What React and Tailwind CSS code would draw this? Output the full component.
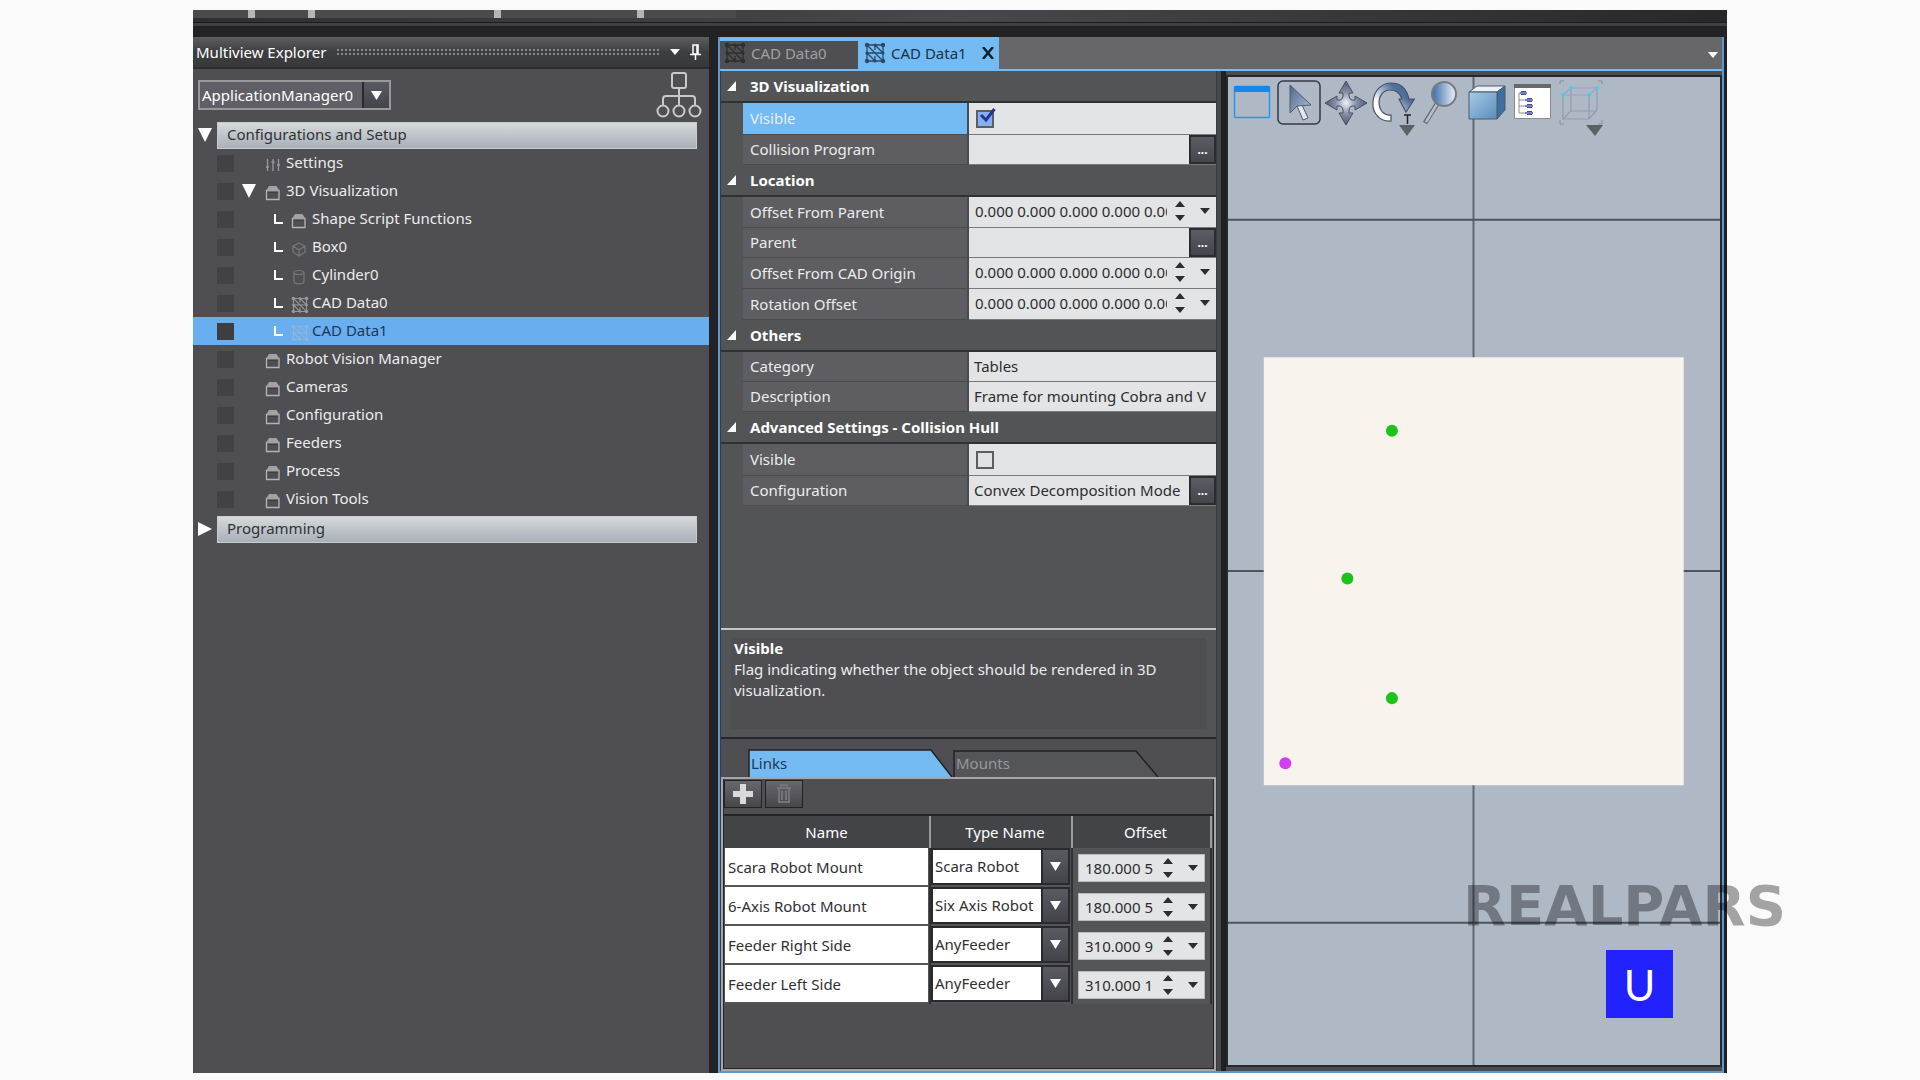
import clsx from 'clsx';

const treeItems = [
  { label: 'Settings', icon: 'settings', depth: 0 },
  { label: '3D Visualization', icon: 'folder', depth: 0, open: true },
  { label: 'Shape Script Functions', icon: 'folder', depth: 1 },
  { label: 'Box0', icon: 'box', depth: 1 },
  { label: 'Cylinder0', icon: 'cylinder', depth: 1 },
  { label: 'CAD Data0', icon: 'cad', depth: 1 },
  { label: 'CAD Data1', icon: 'cad', depth: 1, selected: true },
  { label: 'Robot Vision Manager', icon: 'folder', depth: 0 },
  { label: 'Cameras', icon: 'folder', depth: 0 },
  { label: 'Configuration', icon: 'folder', depth: 0 },
  { label: 'Feeders', icon: 'folder', depth: 0 },
  { label: 'Process', icon: 'folder', depth: 0 },
  { label: 'Vision Tools', icon: 'folder', depth: 0 },
];

const zeroOffset = '0.000 0.000 0.000 0.000 0.000 0.000';

const propertyGroups = [
  {
    title: '3D Visualization',
    rows: [
      { id: 'visible', label: 'Visible', type: 'check', checked: true, selected: true },
      { id: 'collision-program', label: 'Collision Program', type: 'browse', value: '' },
    ],
  },
  {
    title: 'Location',
    rows: [
      { id: 'offset-parent', label: 'Offset From Parent', type: 'spin', value: zeroOffset },
      { id: 'parent', label: 'Parent', type: 'browse', value: '' },
      { id: 'offset-cad', label: 'Offset From CAD Origin', type: 'spin', value: zeroOffset },
      { id: 'rotation', label: 'Rotation Offset', type: 'spin', value: zeroOffset },
    ],
  },
  {
    title: 'Others',
    rows: [
      { id: 'category', label: 'Category', type: 'text', value: 'Tables' },
      { id: 'description', label: 'Description', type: 'text', value: 'Frame for mounting Cobra and V' },
    ],
  },
  {
    title: 'Advanced Settings - Collision Hull',
    rows: [
      { id: 'hull-visible', label: 'Visible', type: 'check', checked: false },
      { id: 'hull-config', label: 'Configuration', type: 'browse', value: 'Convex Decomposition Mode' },
    ],
  },
];

const links = [
  { name: 'Scara Robot Mount', type: 'Scara Robot', offset: '180.000 5' },
  { name: '6-Axis Robot Mount', type: 'Six Axis Robot', offset: '180.000 5' },
  { name: 'Feeder Right Side', type: 'AnyFeeder', offset: '310.000 9' },
  { name: 'Feeder Left Side', type: 'AnyFeeder', offset: '310.000 1' },
];

const rowHeights = {
  check: 'h-8',
  browse: 'h-[30px]',
  spin: 'h-[31px]',
  text: 'h-[30px]',
};

function Caret({ className }) {
  return (
    <svg className={className} viewBox="0 0 10 7" preserveAspectRatio="none" aria-hidden="true">
      <path d="M0 0h10L5 7z" fill="currentColor" />
    </svg>
  );
}

function CadIcon({ className }) {
  return (
    <svg className={className} viewBox="0 0 22 22" fill="none" stroke="currentColor" aria-hidden="true">
      <path d="M3 2v18M19 2v18M2 3h18M2 11h18M2 19h18M3 3l16 16M11 3l8 8M3 11l8 8M11 3v5M11 14v5" strokeWidth="1.300" />
      <g fill="currentColor" stroke="none">
        <circle cx="3" cy="3" r="2.200" />
        <circle cx="11" cy="3" r="1.600" />
        <circle cx="19" cy="3" r="2.200" />
        <circle cx="3" cy="11" r="1.600" />
        <circle cx="19" cy="11" r="1.600" />
        <circle cx="3" cy="19" r="2.200" />
        <circle cx="11" cy="19" r="1.600" />
        <circle cx="19" cy="19" r="2.200" />
      </g>
    </svg>
  );
}

function TreeIcon({ name, selected }) {
  if (name === 'cad') {
    return <CadIcon className={clsx('h-[18px] w-[18px]', selected ? 'text-[#8fb4dc]' : 'text-[#98989c]')} />;
  }
  if (name === 'settings') {
    return (
      <svg className="h-4 w-4" viewBox="0 0 16 16" fill="none" stroke="#9a9a9e" strokeWidth="1.300" aria-hidden="true">
        <path d="M2.500 2v12M8 2v12M13.500 2v12M1 10h3M6.500 5h3M12 8h3" />
      </svg>
    );
  }
  if (name === 'box') {
    return (
      <svg className="h-4 w-4" viewBox="0 0 16 16" fill="none" stroke="#77777b" strokeWidth="1.200" aria-hidden="true">
        <path d="M8 2l6 3v6l-6 4-6-4V5zM2 5l6 4 6-4M8 9v6" />
      </svg>
    );
  }
  if (name === 'cylinder') {
    return (
      <svg className="h-4 w-4" viewBox="0 0 16 16" fill="none" stroke="#77777b" strokeWidth="1.200" aria-hidden="true">
        <ellipse cx="8" cy="3.500" rx="5" ry="2" />
        <path d="M3 3.500v9c0 3 10 3 10 0v-9" />
      </svg>
    );
  }
  return (
    <svg className="h-4 w-4" viewBox="0 0 16 16" fill="none" aria-hidden="true">
      <path d="M1.500 5.500v9h12.500v-9z" stroke="#b4b4b6" strokeWidth="1.300" />
      <path d="M1 6l3-5h7.500l3 5z" fill="#a2a2a5" />
      <path d="M3 7.500h9.500" stroke="#3f3f42" />
    </svg>
  );
}

function SelectBox({ id, label, value, className, arrowClass }) {
  return (
    <div className={clsx('relative', className)}>
      <select id={id} aria-label={label} defaultValue={value} className="h-full w-full appearance-none bg-transparent pl-[2px] pr-6 outline-none">
        <option>{value}</option>
      </select>
      <span className={clsx('pointer-events-none absolute inset-y-0 right-0 flex items-center justify-center border-l-2 border-[#2a2a2d] bg-gradient-to-b from-[#5a5a62] to-[#43434a] text-white', arrowClass)}>
        <Caret className="h-[9px] w-[11px]" />
      </span>
    </div>
  );
}

function SpinBox({ id, label, value, className }) {
  return (
    <div className={clsx('flex h-full items-center bg-[#e2e4e5] text-[#2c2d30]', className)}>
      <input id={id} aria-label={label} defaultValue={value} className="h-full min-w-0 flex-1 bg-transparent outline-none" />
      <div className="ml-2 flex flex-col gap-2">
        <button type="button" aria-label="Increase" className="block">
          <Caret className="h-[6px] w-[10px] rotate-180" />
        </button>
        <button type="button" aria-label="Decrease" className="block">
          <Caret className="h-[6px] w-[10px]" />
        </button>
      </div>
      <button type="button" aria-label="Open editor" className="ml-[15px] mr-[6px]">
        <Caret className="h-[6px] w-[10px]" />
      </button>
    </div>
  );
}

function BarHeader({ label, open }) {
  return (
    <button type="button" aria-expanded={open} className="flex h-7 w-full items-center gap-[5px] pl-[5px] pr-3 text-left">
      <Caret className={clsx('h-[14px] w-[14px] shrink-0 text-white', !open && '-rotate-90')} />
      <span className="flex h-[27px] flex-1 items-center border border-[#c6ccd0] bg-gradient-to-b from-[#d7d9da] to-[#a8b0b8] pb-[2px] pl-[9px] text-[#2f3236]">
        {label}
      </span>
    </button>
  );
}

function TreeRow({ item }) {
  return (
    <li className={clsx('flex h-7 items-center pl-6', item.selected ? 'bg-[#69aeef] text-[#1d3855]' : 'text-[#ececec]')}>
      <span className={clsx('h-[17px] w-[17px] shrink-0', item.selected ? 'bg-[#3e3e42]' : 'bg-[#424246]')} />
      <span className="flex w-[31px] shrink-0 justify-center text-white">
        {item.open && <Caret className="ml-[-2px] h-[14px] w-[14px]" />}
      </span>
      {item.depth > 0 && <span className="ml-[9px] mr-2 h-[10px] w-[9px] shrink-0 border-b-2 border-l-2 border-white" />}
      <span className="flex w-[21px] shrink-0 pt-1">
        <TreeIcon name={item.icon} selected={item.selected} />
      </span>
      <span className="whitespace-nowrap pb-[2px]">{item.label}</span>
    </li>
  );
}

function Explorer() {
  return (
    <aside className="flex w-[516px] shrink-0 flex-col bg-[#4f4e52] text-[15px]">
      <header className="flex h-8 shrink-0 items-center border-b-2 border-[#2b2c2e] bg-gradient-to-b from-[#5c5e60] via-[#3c3e40] to-[#38393b] pl-[3px] pr-2 text-white">
        <h2 className="whitespace-nowrap">Multiview Explorer</h2>
        <span className="ml-[10px] mr-[10px] h-2 flex-1 bg-[radial-gradient(circle,#85878a_1px,transparent_1px)] bg-[size:4px_4px]" />
        <button type="button" aria-label="Panel menu">
          <Caret className="h-[6px] w-[10px]" />
        </button>
        <button type="button" aria-label="Pin panel" className="ml-[10px]">
          <svg className="h-4 w-[11px]" viewBox="0 0 11 16" fill="none" stroke="#fff" strokeWidth="1.500" aria-hidden="true">
            <path d="M3 1h5v9H3zM0 10.500h11M5.500 11v5M7 1v9" />
          </svg>
        </button>
      </header>
      <div className="flex items-end justify-between pb-[3px] pl-[5px] pr-[7px] pt-[3px]">
        <SelectBox
          id="application"
          label="Application"
          value="ApplicationManager0"
          className="mb-2 h-[30px] w-[193px] border-2 border-[#99999c] bg-[#605f65] text-white"
          arrowClass="w-[27px]"
        />
        <button type="button" aria-label="Show topology">
          <svg className="h-[46px] w-[46px]" viewBox="0 0 46 46" fill="none" stroke="#c9c9cb" strokeWidth="2" aria-hidden="true">
            <rect x="16" y="1" width="14" height="15" rx="2" />
            <path d="M23 16v17M7 33v-6q0-3 3-3h26q3 0 3 3v6" />
            <circle cx="7" cy="39" r="5.500" />
            <circle cx="23" cy="39" r="5.500" />
            <circle cx="39" cy="39" r="5.500" />
          </svg>
        </button>
      </div>
      <BarHeader label="Configurations and Setup" open />
      <ul className="pb-[2px]">
        {treeItems.map((item) => (
          <TreeRow key={item.label} item={item} />
        ))}
      </ul>
      <BarHeader label="Programming" open={false} />
    </aside>
  );
}

function PropertyValue({ row }) {
  if (row.type === 'check') {
    return (
      <div className="relative flex h-full items-center bg-[#e2e4e5] pl-[7px]">
        <input
          id={row.id}
          type="checkbox"
          defaultChecked={row.checked}
          className="h-[18px] w-[18px] appearance-none border-2 border-[#5c5d60] bg-[#dfe1e2] checked:bg-[#84aff5]"
        />
        {row.checked && (
          <svg className="pointer-events-none absolute left-[10px] top-[5px] h-[15px] w-[17px]" viewBox="0 0 17 15" fill="none" stroke="#27348f" strokeWidth="3" aria-hidden="true">
            <path d="M2 7l5 5 8.500-11" />
          </svg>
        )}
      </div>
    );
  }
  if (row.type === 'spin') {
    return <SpinBox id={row.id} value={row.value} className="pb-[2px] pl-[6px]" />;
  }
  return (
    <div className="flex h-full bg-[#e2e4e5] text-[#2c2d30]">
      <input id={row.id} defaultValue={row.value} className="min-w-0 flex-1 bg-transparent pl-[5px] outline-none" />
      {row.type === 'browse' && (
        <button type="button" aria-label={`Browse ${row.label}`} className="w-[27px] shrink-0 border-2 border-[#2c2c30] bg-gradient-to-b from-[#5c5c66] to-[#45454c] text-xs font-bold leading-3 text-white">
          ...
        </button>
      )}
    </div>
  );
}

function PropertyGrid() {
  return (
    <div className="flex-1">
      {propertyGroups.map((group) => (
        <section key={group.title}>
          <h3 className="flex h-8 items-center border-b-2 border-[#2f3133] pl-[6px] font-bold text-white">
            <svg className="mr-[14px] h-[10px] w-[9px]" viewBox="0 0 9 10" aria-hidden="true">
              <path d="M9 0v10H0z" fill="#fff" />
            </svg>
            {group.title}
          </h3>
          {group.rows.map((row) => (
            <div key={row.id} className={clsx('flex pl-[22px]', rowHeights[row.type])}>
              <label
                htmlFor={row.id}
                className={clsx(
                  'flex w-[226px] shrink-0 items-center border-b border-r-2 border-[#4a4b4e] pl-[7px] text-[#ececec]',
                  row.selected ? 'bg-[#74bbf3]' : 'bg-[#5e5d61]'
                )}
              >
                {row.label}
              </label>
              <div className="min-w-0 flex-1 border-b border-[#77797b]">
                <PropertyValue row={row} />
              </div>
            </div>
          ))}
        </section>
      ))}
    </div>
  );
}

function LinksPanel() {
  return (
    <div className="flex h-[332px] shrink-0 flex-col bg-[#4f4e52] pt-[10px]">
      <div role="tablist" className="flex h-7 pl-[27px]">
        <button type="button" role="tab" aria-selected="true" className="relative w-[205px] text-left text-[#1d3855]">
          <svg className="absolute inset-0 h-full w-full" viewBox="0 0 205 28" preserveAspectRatio="none" aria-hidden="true">
            <path d="M1 28V1h182l21 27" fill="#74bbf3" stroke="#202124" strokeWidth="1.500" />
          </svg>
          <span className="relative pl-[3px]">Links</span>
        </button>
        <button type="button" role="tab" aria-selected="false" className="relative w-[207px] text-left text-[#98989b]">
          <svg className="absolute inset-0 h-full w-full" viewBox="0 0 207 28" preserveAspectRatio="none" aria-hidden="true">
            <path d="M1 28V2h182l22 26" fill="#545558" stroke="#202124" strokeWidth="1.500" />
          </svg>
          <span className="relative pl-[3px]">Mounts</span>
        </button>
      </div>
      <div className="flex flex-1 flex-col border-2 border-[#a6a6a8]">
        <div className="flex h-[35px] shrink-0 gap-[3px] border-l border-r border-[#29292c] pt-px">
          <button type="button" aria-label="Add link" className="flex h-7 w-[38px] items-center justify-center border border-[#222225] bg-gradient-to-b from-[#67676d] to-[#46464b]">
            <svg className="h-5 w-5" viewBox="0 0 20 20" aria-hidden="true">
              <path d="M7 0h6v7h7v6h-7v7H7v-7H0V7h7z" fill="#d9d9db" />
            </svg>
          </button>
          <button type="button" aria-label="Delete link" className="flex h-7 w-[38px] items-center justify-center border border-[#222225] bg-gradient-to-b from-[#67676d] to-[#46464b]">
            <svg className="h-5 w-4" viewBox="0 0 16 20" fill="none" stroke="#73737a" strokeWidth="2" aria-hidden="true">
              <path d="M1 4h14M5 3V1h6v2M3 5v13h10V5M6 7v9M10 7v9" />
            </svg>
          </button>
        </div>
        <div className="flex-1 border border-t-2 border-[#242427] pr-px">
          <table className="w-full table-fixed border-collapse">
            <colgroup>
              <col className="w-[206px]" />
              <col className="w-[142px]" />
              <col />
            </colgroup>
            <thead>
              <tr className="h-8 bg-[#434447] text-white">
                <th className="border-r-2 border-[#9a9b9d] font-normal">Name</th>
                <th className="border-r-2 border-[#9a9b9d] pl-2 font-normal">Type Name</th>
                <th className="border-r-2 border-[#9a9b9d] pl-2 font-normal">Offset</th>
              </tr>
            </thead>
            <tbody>
              {links.map((link) => (
                <tr key={link.name} className="h-[39px] bg-[#545557]">
                  <td className="border-r-2 border-[#303033] p-0 pb-[2px] pl-px pr-px">
                    <input aria-label="Link name" defaultValue={link.name} className="block h-[37px] w-full bg-white pl-[3px] text-[#2f3033] outline-none" />
                  </td>
                  <td className="border-r-2 border-[#303033] p-0 pb-[2px] pr-px">
                    <SelectBox
                      label="Type name"
                      value={link.type}
                      className="h-[37px] border-2 border-[#2a2a2d] bg-white text-[#2f3033]"
                      arrowClass="w-[27px]"
                    />
                  </td>
                  <td className="border-r-2 border-[#303033] px-[5px] py-0">
                    <SpinBox label="Offset" value={link.offset} className="!h-7 border border-[#b9babc] pl-[6px]" />
                  </td>
                </tr>
              ))}
            </tbody>
          </table>
        </div>
      </div>
    </div>
  );
}

const toolGlyphs = [
  {
    label: 'Window',
    art: (
      <>
        <rect x="4.500" y="7.500" width="35" height="31" rx="1" fill="none" stroke="#2196f0" strokeWidth="1.500" />
        <path d="M4 7h36v6H4z" fill="#1787ee" />
      </>
    ),
  },
  {
    label: 'Select',
    art: (
      <>
        <rect x="1" y="2" width="42" height="43" rx="5" fill="none" stroke="#34384a" strokeWidth="1.500" />
        <path d="M20 27l6 14 5-2-6-13" fill="#e4e7ee" stroke="#55596a" />
        <path d="M13 6v28l7-7 14-1z" fill="url(#steel)" stroke="#55596a" />
      </>
    ),
  },
  {
    label: 'Move',
    art: (
      <path
        d="M22 2l7 12h-4v3q0 3 3 4h3v-4l12 7-12 7v-4h-3q-3 1-3 4v3h4l-7 12-7-12h4v-3q0-3-3-4h-3v4L1 24l12-7v4h3q3-1 3-4v-3h-4z"
        fill="url(#star)"
        stroke="#4b5064"
      />
    ),
  },
  {
    label: 'Rotate',
    art: (
      <>
        <path d="M20 42C8 43 1 33 2 23C3 10 12 4 20 4C31 4 36 11 38 20h5.500L35 33L28 20h3C29 14 25 11 19 11C12 11 8 17 8 23C8 31 13 37 20 36z" fill="url(#turn)" stroke="#4b5064" strokeWidth="1.200" />
        <path d="M33 36h7M36.500 36v9" stroke="#222" strokeWidth="1.500" />
        <path d="M28 46h16l-8 11z" fill="#5b6163" />
      </>
    ),
  },
  {
    label: 'Zoom',
    art: (
      <>
        <path d="M19 25L7 44" stroke="#666a72" strokeWidth="5" />
        <path d="M19 25L8 43" stroke="#b9c0ca" strokeWidth="2.500" />
        <circle cx="26" cy="15" r="12" fill="url(#lens)" stroke="#777b82" strokeWidth="2" />
      </>
    ),
  },
  {
    label: 'View cube',
    art: (
      <g stroke="#4c5a6c" strokeWidth="1">
        <path d="M4 13l8-6h28l-8 6z" fill="#eef2f6" />
        <path d="M32 13l8-6v24l-8 9z" fill="#3f6f9f" />
        <path d="M4 13h28v27H4z" fill="url(#face)" />
      </g>
    ),
  },
  {
    label: 'Scene tree',
    art: (
      <>
        <path d="M2.500 6.500h36v33h-36z" fill="#fff" stroke="#8a8c90" />
        <path d="M2 5h37v4H2z" fill="#666869" />
        <path d="M7 14v20h8M7 21h8M7 27h8M7 14h4" fill="none" stroke="#8d9096" />
        <path d="M9 12h5v4H9zM15 19h5v4h-5zM15 25h5v4h-5zM15 32h5v4h-5z" fill="#4348a0" />
        <path d="M8 13h7v2H8zM13 20h8v2h-8zM13 26h8v2h-8zM13 33h8v2h-8z" fill="#7a7fc0" />
      </>
    ),
  },
  {
    label: 'Wireframe',
    art: (
      <>
        <path d="M1 5V2h4M39 2h4v3M1 41v4h4M39 45h4v-4" fill="none" stroke="#8b8f96" />
        <path d="M4 16v24h26l8-9V9M12 9v23h18M30 16v24M4 40l8-8M30 32h8" fill="none" stroke="#949bac" strokeWidth="1.200" />
        <path d="M4 16h26l8-7H12z" fill="none" stroke="#9f9bd2" strokeWidth="1.200" />
        <g fill="#4fcddc">
          <circle cx="4" cy="16" r="2" />
          <circle cx="12" cy="9" r="2" />
          <circle cx="30" cy="16" r="2" />
          <circle cx="38" cy="9" r="2" />
        </g>
        <path d="M27 46h17l-8 11z" fill="#5b6163" />
      </>
    ),
  },
];

function Viewport() {
  return (
    <div className="relative min-w-0 flex-1 overflow-hidden border-2 border-[#26282b] bg-[#afb9c6]">
      <svg className="absolute inset-0 h-full w-full" viewBox="0 0 493 987" preserveAspectRatio="xMidYMid slice" aria-label="3D scene">
        <path d="M246 0v987" stroke="#5f6771" strokeWidth="2" />
        <path d="M0 142.500h493M0 493.500h493M0 845h493" stroke="#4d565f" strokeWidth="2" />
        <rect x="36.500" y="280" width="419.500" height="427.500" fill="#f8f3ed" />
        <g fill="#1dc31d">
          <circle cx="164.500" cy="353.500" r="6" />
          <circle cx="120" cy="501" r="6" />
          <circle cx="164.500" cy="620.500" r="6" />
        </g>
        <circle cx="58" cy="685.500" r="6" fill="#d43df0" />
      </svg>
      <svg className="absolute h-0 w-0" aria-hidden="true">
        <defs>
          <linearGradient id="steel" x1="0" y1="0" x2="1" y2="1">
            <stop offset="0" stopColor="#4d668f" />
            <stop offset="1" stopColor="#b3c0d8" />
          </linearGradient>
          <radialGradient id="star">
            <stop offset="0" stopColor="#eef1f6" />
            <stop offset=".5" stopColor="#8590a8" />
            <stop offset="1" stopColor="#4d5873" />
          </radialGradient>
          <linearGradient id="turn" x1="0" y1="1" x2="1" y2="0">
            <stop offset=".3" stopColor="#fff" />
            <stop offset=".7" stopColor="#4d6f9c" />
          </linearGradient>
          <linearGradient id="lens">
            <stop offset="0" stopColor="#3c68a8" />
            <stop offset="1" stopColor="#eef3f9" />
          </linearGradient>
          <linearGradient id="face" x1="0" y1="0" x2="1" y2="1">
            <stop offset="0" stopColor="#a9cbe6" />
            <stop offset="1" stopColor="#5a8cba" />
          </linearGradient>
        </defs>
      </svg>
      <div className="absolute left-[2px] top-[2px] flex gap-[3px]">
        {toolGlyphs.map((tool) => (
          <button key={tool.label} type="button" aria-label={tool.label}>
            <svg className="h-[58px] w-[44px]" viewBox="0 0 44 58" aria-hidden="true">
              {tool.art}
            </svg>
          </button>
        ))}
      </div>
      <span className="absolute bottom-[47px] right-[47px] flex h-[68px] w-[67px] items-center justify-center bg-[#2222ff] font-['Lato'] text-[43px] leading-none text-white">
        U
      </span>
    </div>
  );
}

function EditorTabs() {
  return (
    <div className="flex h-[34px] shrink-0 items-stretch border-b-2 border-[#74bbf3] bg-[#676668]">
      <button type="button" className="flex w-[138px] items-center gap-[5px] border-t-4 border-[#74bbf3] bg-[#4f4e52] pb-1 pl-1 text-[#a0a0a2]">
        <CadIcon className="h-[22px] w-[22px] text-[#2e2e31]" />
        CAD Data0
      </button>
      <div className="flex w-[141px] items-center gap-[5px] bg-[#74bbf3] pl-[6px] text-[#1b3049]">
        <CadIcon className="h-[22px] w-[22px] text-[#2b4a68]" />
        <button type="button" className="whitespace-nowrap">CAD Data1</button>
        <button type="button" aria-label="Close CAD Data1" className="ml-auto mr-[5px]">
          <svg className="h-3 w-3" viewBox="0 0 12 12" stroke="#16202b" strokeWidth="2.500" aria-hidden="true">
            <path d="M1 0l10 12M11 0L1 12" />
          </svg>
        </button>
      </div>
      <button type="button" aria-label="Open documents" className="ml-auto mr-[4px] pt-1 text-white">
        <Caret className="h-[6px] w-[10px]" />
      </button>
    </div>
  );
}

function Editor() {
  return (
    <main className="flex min-w-0 flex-1 flex-col border-b-2 border-l-2 border-r-2 border-[#5f97c9] bg-[#3c3d40] text-[15px]">
      <EditorTabs />
      <div className="flex min-h-0 flex-1">
        <div className="flex w-[497px] shrink-0 flex-col border-x border-[#3a3b3d] bg-[#525456]">
          <PropertyGrid />
          <div className="h-[111px] shrink-0 border-b-2 border-t-2 border-[#26272a] border-t-[#c4c6c7] px-[10px] py-2">
            <div className="h-full bg-[#4f4e52] px-[3px] leading-[21px] text-[#ececec]">
              <h4 className="font-bold text-white">Visible</h4>
              <p>Flag indicating whether the object should be rendered in 3D visualization.</p>
            </div>
          </div>
          <LinksPanel />
        </div>
        <div className="w-[9px] shrink-0 border-l-4 border-[#47484a] bg-[#1f2023]" />
        <div className="flex min-w-0 flex-1 bg-[#4b4c4f] pb-1 pt-1">
          <Viewport />
        </div>
      </div>
    </main>
  );
}

function TopStrip() {
  return (
    <div className="flex h-[27px] shrink-0 flex-col bg-[#232325]">
      <div className="flex h-[13px] items-start border-b border-[#1b1b1d] bg-gradient-to-r from-[#2f2f31] via-[#47484b] via-50% to-[#28282a]">
        <span className="h-2 w-[55px] bg-[#4b4b4d]" />
        <span className="h-2 w-[7px] bg-[#b5b5b7]" />
        <span className="h-2 w-[53px] bg-[#4b4b4d]" />
        <span className="h-2 w-[7px] bg-[#b5b5b7]" />
        <span className="h-2 w-[179px] bg-[#4b4b4d]" />
        <span className="h-2 w-[7px] bg-[#b5b5b7]" />
        <span className="h-2 w-[136px] bg-[#4b4b4d]" />
        <span className="h-2 w-[7px] bg-[#b5b5b7]" />
        <span className="h-2 w-[92px] bg-[#4b4b4d]" />
      </div>
      <div className="h-[3px] bg-[#414144]" />
    </div>
  );
}

export default function App() {
  return (
    <div className="relative flex h-screen flex-col bg-[#fafafa] px-[193px] pb-[7px] pt-[10px] font-['Noto_Sans','Open_Sans',sans-serif]">
      <TopStrip />
      <div className="flex min-h-0 flex-1 border-r-[3px] border-[#202124] bg-[#232327]">
        <Explorer />
        <div className="w-[9px] shrink-0" />
        <Editor />
      </div>
      <div className="pointer-events-none absolute bottom-[147px] right-[121px] w-[349px] text-center font-['DejaVu_Sans'] text-[56px] font-bold leading-[54px] text-black/35">
        REALPARS
      </div>
    </div>
  );
}
